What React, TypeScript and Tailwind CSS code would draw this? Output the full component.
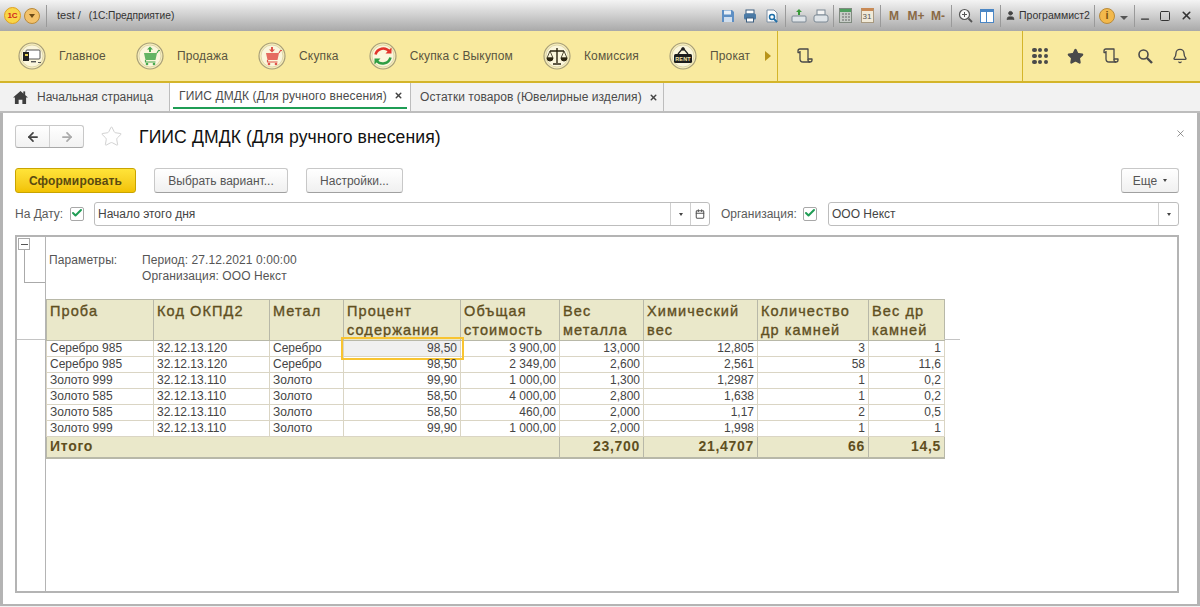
import { Bell, Star, ArrowLeft, ArrowRight, X, Check, User, Minus, Square, Calendar } from "lucide-react";

const navItems = [
  { label: "Главное", icon: "main" },
  { label: "Продажа", icon: "sale" },
  { label: "Скупка", icon: "buy" },
  { label: "Скупка с Выкупом", icon: "cycle" },
  { label: "Комиссия", icon: "scales" },
  { label: "Прокат", icon: "rent" },
];

const columns = [
  { title: ["Проба"], width: "w-[107px]" },
  { title: ["Код ОКПД2"], width: "w-[116px]" },
  { title: ["Метал"], width: "w-[74px]" },
  { title: ["Процент", "содержания"], width: "w-[117px]" },
  { title: ["Объщая", "стоимость"], width: "w-[99px]" },
  { title: ["Вес", "металла"], width: "w-[84px]" },
  { title: ["Химический", "вес"], width: "w-[114px]" },
  { title: ["Количество", "др камней"], width: "w-[111px]" },
  { title: ["Вес др", "камней"], width: "w-[76px]" },
];

const rows = [
  ["Серебро 985", "32.12.13.120", "Серебро", "98,50", "3 900,00", "13,000", "12,805", "3", "1"],
  ["Серебро 985", "32.12.13.120", "Серебро", "98,50", "2 349,00", "2,600", "2,561", "58", "11,6"],
  ["Золото 999", "32.12.13.110", "Золото", "99,90", "1 000,00", "1,300", "1,2987", "1", "0,2"],
  ["Золото 585", "32.12.13.110", "Золото", "58,50", "4 000,00", "2,800", "1,638", "1", "0,2"],
  ["Золото 585", "32.12.13.110", "Золото", "58,50", "460,00", "2,000", "1,17", "2", "0,5"],
  ["Золото 999", "32.12.13.110", "Золото", "99,90", "1 000,00", "2,000", "1,998", "1", "1"],
];

function ScrollIcon({ className = "" }: { className?: string }) {
  return (
    <svg viewBox="0 0 16 16" className={className} fill="none" stroke="#4a4a4a" strokeWidth="1.3" strokeLinejoin="round">
      <path d="M1 3a2 2 0 0 1 2-2h8v10h4v1a2 2 0 0 1-2 2H6a3 3 0 0 1-3-3V3" />
      <path d="M1 3v1.500h2" />
      <path d="M13 14a2 2 0 0 1-2-2v-1" />
    </svg>
  );
}

function NavIcon({ name }: { name: string }) {
  return (
    <svg viewBox="0 0 28 28" className="w-[28px] h-[28px] shrink-0">
      <circle cx="14" cy="14" r="13" fill="#f7eebc" stroke="#a89f78" strokeWidth="1.2" />
      <circle cx="14" cy="14" r="11" fill="#fbf6dc" stroke="#d8cfa0" strokeWidth="0.8" />
      {name === "main" && (
        <g>
          <rect x="8" y="8" width="14" height="9" rx="1" fill="#fff" stroke="#555" />
          <rect x="5" y="10" width="6" height="9" fill="#222" />
          <rect x="7" y="12" width="3" height="2" fill="#e8d050" />
          <rect x="13" y="19" width="5" height="1.400" fill="#555" />
          <rect x="20" y="20" width="3" height="1" fill="#555" />
        </g>
      )}
      {name === "sale" && <Cart color="#49a84f" arrow="M14 4.500l3 3h-2v2.500h-2V7.500h-2z" />}
      {name === "buy" && <Cart color="#e0544a" arrow="M14 10.500l3-3h-2V5h-2v2.500h-2z" />}
      {name === "cycle" && (
        <g fill="none" strokeWidth="2.6">
          <path d="M6.500 12.500a8 8 0 0 1 14-3" stroke="#e2332b" />
          <path d="M21.500 15.500a8 8 0 0 1-14 3" stroke="#2f9e44" />
          <path d="M22.500 5.500v6h-6z" fill="#e2332b" stroke="none" />
          <path d="M5.500 22.500v-6h6z" fill="#2f9e44" stroke="none" />
        </g>
      )}
      {name === "scales" && (
        <g fill="#2b2410" stroke="#2b2410">
          <path d="M14 6v15M7 9h14M10 22h8" strokeWidth="1.4" fill="none" />
          <path d="M7 9l-3 7h6zM21 9l-3 7h6z" fill="none" strokeWidth="0.8" />
          <path d="M4 16a3 3 0 0 0 6 0zM18 16a3 3 0 0 0 6 0z" />
        </g>
      )}
      {name === "rent" && (
        <g>
          <path d="M9 12l5-6 5 6" fill="none" stroke="#222" strokeWidth="1.2" />
          <circle cx="14" cy="7" r="1.800" fill="#222" />
          <rect x="5" y="12" width="18" height="9" rx="1.500" fill="#1d1d1d" />
          <text x="14" y="19" textAnchor="middle" fontSize="5.500" fontWeight="700" fill="#f5e9b0" fontFamily="Arial">RENT</text>
        </g>
      )}
    </svg>
  );
}

function Cart({ color, arrow }: { color: string; arrow: string }) {
  return (
    <g>
      <path d={arrow} fill={color} />
      <path d="M8 11h13l-1.500 7h-10z" fill={color} opacity="0.85" />
      <path d="M21 11l1.500-2.500H24M9.500 18v2h10" fill="none" stroke={color} strokeWidth="1.2" />
      <circle cx="11" cy="22" r="1.300" fill={color} />
      <circle cx="18" cy="22" r="1.300" fill={color} />
    </g>
  );
}

function Divider() {
  return <div className="w-px h-[22px] bg-[#9a9a9a] mx-[2px] shrink-0" />;
}

function Slot({ w = "w-[22px]", children }: { w?: string; children: React.ReactNode }) {
  return <div className={`${w} h-[20px] flex items-center justify-center shrink-0`}>{children}</div>;
}

function TitleBar() {
  return (
    <div className="h-[31px] shrink-0 flex items-center bg-gradient-to-b from-[#f4f4f4] via-[#cfcfcf] to-[#a9a9a9] pr-[3px] text-[11px] text-[#333]">
      <div className="w-[17px] h-[17px] ml-[4px] rounded-full bg-[#f9d648] border border-[#e0a020] flex items-center justify-center text-[8px] font-bold text-[#d0281e]">1С</div>
      <div className="w-[16px] h-[16px] ml-[3px] rounded-full bg-[#f3c26a] border border-[#b98a3a] flex items-center justify-center">
        <div className="w-0 h-0 border-x-[3.500px] border-x-transparent border-t-[4px] border-t-[#6b4a16]" />
      </div>
      <div className="w-px h-[22px] bg-[#9a9a9a] ml-[6px]" />
      <span className="ml-[10px]">test /</span>
      <span className="ml-[8px] text-[10.2px]">(1С:Предприятие)</span>
      <div className="ml-auto flex items-center">
        <Slot>
          <svg viewBox="0 0 14 14" className="w-[14px] h-[14px]">
            <path d="M1 1h10l2 2v10H1z" fill="#5d8fc4" />
            <rect x="3" y="1.500" width="7" height="4" fill="#e8eff6" />
            <rect x="3" y="8" width="8" height="5" fill="#cfdeee" />
          </svg>
        </Slot>
        <Slot>
          <svg viewBox="0 0 14 14" className="w-[14px] h-[14px]">
            <rect x="3" y="1" width="8" height="4" fill="#fff" stroke="#3d5f80" />
            <rect x="1" y="4.500" width="12" height="6" rx="1.500" fill="#4a7aa6" />
            <rect x="3.500" y="9" width="7" height="4" fill="#fff" stroke="#3d5f80" />
          </svg>
        </Slot>
        <Slot>
          <svg viewBox="0 0 14 14" className="w-[14px] h-[14px]">
            <path d="M2 1h7l3 3v9H2z" fill="#fff" stroke="#7a8ea3" />
            <circle cx="7" cy="8" r="2.500" fill="none" stroke="#1f6fa8" strokeWidth="1.500" />
            <path d="M9 10l3 3" stroke="#1f6fa8" strokeWidth="1.800" />
          </svg>
        </Slot>
        <Divider />
        <Slot>
          <svg viewBox="0 0 16 14" className="w-[16px] h-[14px]">
            <path d="M8 0l3 3H9v3H7V3H5z" fill="#3a9a3a" />
            <rect x="1" y="7" width="14" height="6" rx="1" fill="#dfe4e8" stroke="#7b8894" />
          </svg>
        </Slot>
        <Slot>
          <svg viewBox="0 0 16 14" className="w-[16px] h-[14px]">
            <rect x="4" y="1" width="8" height="5" fill="#f4f4f4" stroke="#7b8894" />
            <rect x="1" y="6" width="14" height="7" rx="2" fill="#dfe4e8" stroke="#7b8894" />
          </svg>
        </Slot>
        <div className="w-px h-[22px] bg-[#9a9a9a] ml-[1px] shrink-0" />
        <Slot>
          <svg viewBox="0 0 13 15" className="w-[13px] h-[15px]">
            <rect x="0.500" y="0.500" width="12" height="14" fill="#c8cdc8" stroke="#7f8a7f" />
            <rect x="1" y="1" width="11" height="3" fill="#4f9f5f" />
            <path d="M3 6h2M6 6h2M9 6h2M3 9h2M6 9h2M9 9h2M3 12h2M6 12h2M9 12h2" stroke="#666" />
          </svg>
        </Slot>
        <Slot>
          <div className="w-[13px] h-[15px] bg-[#f1ead8] border border-[#a89a80] border-t-[3px] border-t-[#c98a55] text-[8px] leading-[11px] text-center text-[#555]">31</div>
        </Slot>
        <Divider />
        <div className="flex items-center font-bold text-[#8a6a45] text-[12px]">
          <Slot>M</Slot>
          <Slot>M+</Slot>
          <Slot>M-</Slot>
        </div>
        <Divider />
        <Slot>
          <svg viewBox="0 0 15 15" className="w-[15px] h-[15px]">
            <circle cx="6.500" cy="6.500" r="5" fill="#f7f7f7" stroke="#555" strokeWidth="1.200" />
            <path d="M4 6.500h5M6.500 4v5" stroke="#555" />
            <path d="M10.500 10.500l3.500 3.500" stroke="#555" strokeWidth="1.800" />
          </svg>
        </Slot>
        <Slot>
          <div className="w-[14px] h-[14px] flex bg-white border-t-[3px] border-x border-b border-[#4a86c5]">
            <div className="w-1/2 border-r border-[#4a86c5]" />
          </div>
        </Slot>
        <Divider />
        <User className="w-[11px] h-[11px] ml-[2px] text-[#444] fill-[#444]" />
        <span className="ml-[3px] text-[10.5px] text-[#333] w-[71px] whitespace-nowrap">Программист2</span>
        <div className="w-px h-[22px] bg-[#9a9a9a] ml-[4px]" />
        <div className="w-[16px] h-[16px] ml-[4px] rounded-full bg-[#f3b94c] border border-[#b98a3a] flex items-center justify-center text-[11px] font-bold text-[#7b5412]">i</div>
        <div className="w-0 h-0 ml-[5px] mt-[4px] border-x-[4px] border-x-transparent border-t-[4px] border-t-[#555]" />
        <div className="w-px h-[22px] bg-[#9a9a9a] ml-[6px]" />
        <Slot w="w-[20px]"><Minus className="w-[12px] h-[12px] mt-[6px] text-[#333]" strokeWidth={2.500} /></Slot>
        <Slot w="w-[20px]"><Square className="w-[12px] h-[12px] text-[#333]" strokeWidth={2} /></Slot>
        <Slot><X className="w-[13px] h-[13px] text-[#333]" strokeWidth={3} /></Slot>
      </div>
    </div>
  );
}

function NavBar() {
  return (
    <div className="h-[52px] shrink-0 flex bg-[#f9ea9f] border-b-2 border-[#d4b52a] text-[12px] tracking-[0.15px] text-[#5a5540]">
      <div className="w-[778px] border-r border-[#d4b52a] flex items-center pl-[18px] gap-[30px] relative">
        {navItems.map((item) => (
          <div key={item.label} className="flex items-center gap-[13px]">
            <NavIcon name={item.icon} />
            <span>{item.label}</span>
          </div>
        ))}
        <div className="absolute left-[765px] top-[20px] w-0 h-0 border-y-[5px] border-y-transparent border-l-[6px] border-l-[#b8941a]" />
      </div>
      <div className="flex-1 flex items-center pl-[19px] border-r border-[#d4b52a]">
        <ScrollIcon className="w-[16px] h-[16px]" />
      </div>
      <div className="w-[177px] shrink-0 flex items-center justify-between pl-[9px] pr-[12px]">
        <div className="grid grid-cols-3 gap-[1.500px] w-[16px]">
          {Array.from({ length: 9 }).map((_, i) => (
            <div key={i} className="w-[4.500px] h-[4.500px] rounded-full bg-[#4a4a4a]" />
          ))}
        </div>
        <Star className="w-[17px] h-[17px] text-[#4a4a4a] fill-[#4a4a4a]" />
        <ScrollIcon className="w-[16px] h-[16px]" />
        <svg viewBox="0 0 16 16" className="w-[16px] h-[16px]" fill="none" stroke="#4a4a4a">
          <circle cx="6.500" cy="6.500" r="4.500" strokeWidth="1.600" />
          <path d="M10 10l5 5" strokeWidth="2.400" />
        </svg>
        <Bell className="w-[16px] h-[16px] text-[#4a4a4a]" strokeWidth={2} />
      </div>
    </div>
  );
}

function Tabs() {
  return (
    <div className="h-[30px] shrink-0 flex bg-[#f2f2f2] border-b-2 border-[#bdbdbd] text-[12px] text-[#4b4b4b]">
      <div className="w-[169px] flex items-center pl-[13px] gap-[9px]">
        <svg viewBox="0 0 16 15" className="w-[15px] h-[14px]" fill="#3f3f3f">
          <path d="M8 1l8 7h-2v7h-4v-4.500H6V15H2V8H0z" />
          <rect x="11" y="1.500" width="2" height="4" />
        </svg>
        <span>Начальная страница</span>
      </div>
      <div className="w-[241px] bg-white border-l border-[#bdbdbd] pl-[9px] pr-[3px] flex flex-col">
        <div className="flex-1 flex items-center pt-[1px] gap-[7px] whitespace-nowrap tracking-[0.13px]">
          <span>ГИИС ДМДК (Для ручного внесения)</span>
          <X className="w-[9px] h-[9px] text-[#444] shrink-0" strokeWidth={4} />
        </div>
        <div className="h-[2px] -ml-[6px] bg-[#1f9d55] mb-[2px]" />
      </div>
      <div className="w-[254px] border-x border-[#bdbdbd] flex items-center pl-[9px] gap-[7px] whitespace-nowrap tracking-[0.06px]">
        <span>Остатки товаров (Ювелирные изделия)</span>
        <X className="w-[9px] h-[9px] text-[#444] shrink-0" strokeWidth={4} />
      </div>
    </div>
  );
}

function GrayButton({ label, w }: { label: string; w: string }) {
  return (
    <button className={`${w} h-[25px] rounded-[3px] border border-[#c8c8c8] border-b-[#a0a0a0] bg-gradient-to-b from-white to-[#f0f0f0] text-[12px] text-[#555]`}>
      {label}
    </button>
  );
}

function Caret() {
  return <div className="w-0 h-0 border-x-[2.500px] border-x-transparent border-t-[3px] border-t-[#444]" />;
}

function Checked() {
  return (
    <div className="w-[14px] h-[14px] border border-[#a8a8a8] rounded-[2px] bg-white flex items-center justify-center shrink-0">
      <Check className="w-[16px] h-[16px] text-[#1f9d55] -mt-[3px]" strokeWidth={4} />
    </div>
  );
}

function Toolbar() {
  return (
    <>
      <div className="flex items-center h-[23px] mt-[12px] relative">
        <div className="w-[69px] h-[23px] flex rounded-[3px] border border-[#c8c8c8] border-b-[#a8a8a8] bg-gradient-to-b from-white to-[#f2f2f2]">
          <div className="flex-1 flex items-center justify-center border-r border-[#d0d0d0]">
            <ArrowLeft className="w-[14px] h-[14px] text-[#444]" strokeWidth={3} />
          </div>
          <div className="flex-1 flex items-center justify-center">
            <ArrowRight className="w-[14px] h-[14px] text-[#aaa]" strokeWidth={3} />
          </div>
        </div>
        <Star className="w-[23px] h-[23px] ml-[16px] text-[#cfcfcf]" strokeWidth={1} />
        <h1 className="ml-[16px] mt-[2px] text-[17.6px] tracking-[0.1px] text-[#111] whitespace-nowrap">ГИИС ДМДК (Для ручного внесения)</h1>
        <X className="absolute right-[11px] top-[3px] w-[11px] h-[11px] text-[#666]" strokeWidth={1.500} />
      </div>
      <div className="flex items-center h-[25px] mt-[20px] gap-[18px] pr-[18px]">
        <button className="w-[121px] h-[25px] rounded-[3px] border border-[#c9a400] bg-gradient-to-b from-[#ffe438] to-[#f2c200] text-[12px] font-bold tracking-[0.15px] text-[#5a4a10]">
          Сформировать
        </button>
        <GrayButton label="Выбрать вариант..." w="w-[134px]" />
        <GrayButton label="Настройки..." w="w-[97px]" />
        <button className="ml-auto w-[58px] h-[25px] rounded-[3px] border border-[#c8c8c8] border-b-[#a0a0a0] bg-gradient-to-b from-white to-[#f0f0f0] text-[12px] text-[#555] flex items-center justify-center gap-[6px]">
          Еще <Caret />
        </button>
      </div>
      <div className="flex items-center h-[24px] mt-[9px] pr-[18px] text-[12px] text-[#5a5a5a]">
        <span className="w-[55px]">На Дату:</span>
        <Checked />
        <div className="ml-[10px] w-[616px] h-[24px] flex items-center border border-[#bdbdbd] rounded-[3px] text-[#444]">
          <span className="flex-1 pl-[3px]">Начало этого дня</span>
          <div className="w-[20px] h-full border-l border-[#cfcfcf] flex items-center justify-center"><Caret /></div>
          <div className="w-[19px] h-full border-l border-[#cfcfcf] flex items-center justify-center">
            <Calendar className="w-[10px] h-[10px] text-[#555]" strokeWidth={2.500} />
          </div>
        </div>
        <span className="ml-[11px] w-[82px] whitespace-nowrap">Организация:</span>
        <Checked />
        <div className="ml-[11px] flex-1 h-[24px] flex items-center border border-[#bdbdbd] rounded-[3px] text-[#444]">
          <span className="flex-1 pl-[3px]">ООО Некст</span>
          <div className="w-[20px] h-full border-l border-[#cfcfcf] flex items-center justify-center"><Caret /></div>
        </div>
      </div>
    </>
  );
}

function ReportTable() {
  const headCell = "border border-[#b8b8a8] bg-[#eae8ca] align-top px-[3px] pt-[2px] text-left text-[14.5px] leading-[19px] font-normal tracking-[1.1px] whitespace-nowrap text-[#5f4f1f] [-webkit-text-stroke:0.35px_#5f4f1f]";
  const totalCell = "h-[21px] bg-[#eae8ca] border-t border-b-2 border-[#b8b8a8] px-[3px] text-right text-[14px] font-bold tracking-[0.7px] text-[#5f4f1f]";
  return (
    <table className="table-fixed border-collapse w-[898px] mt-[15px]">
      <thead>
        <tr className="h-[41px]">
          {columns.map((c) => (
            <th key={c.title[0]} className={`${c.width} ${headCell}`}>
              {c.title.map((line) => (
                <div key={line}>{line}</div>
              ))}
            </th>
          ))}
        </tr>
      </thead>
      <tbody className="text-[12px] leading-[15px] text-[#444]">
        {rows.map((row, r) => (
          <tr key={r} className="h-[16px]">
            {row.map((cell, c) => (
              <td
                key={c}
                className={`border border-[#dad5c4] px-[3px] whitespace-nowrap relative ${c > 2 ? "text-right" : "text-left"} ${r === 0 && c === 3 ? "bg-[#f0f0f0]" : ""}`}
              >
                {cell}
                {r === 0 && c === 3 && (
                  <div className="absolute -left-[3px] -top-[4px] w-[123px] h-[23px] border-2 border-[#f8c431]" />
                )}
              </td>
            ))}
          </tr>
        ))}
        <tr>
          <td colSpan={5} className={`${totalCell} border-l border-r !text-left`}>Итого</td>
          {["23,700", "21,4707", "66", "14,5"].map((v) => (
            <td key={v} className={`${totalCell} border-x`}>{v}</td>
          ))}
        </tr>
      </tbody>
    </table>
  );
}

function Report() {
  return (
    <div className="mt-[9px] mr-[18px] h-[358px] flex border-2 border-[#b4b4b4] relative text-[12px] text-[#555]">
      <div className="w-[28px] shrink-0 relative">
        <div className="absolute left-[1px] top-[1px] w-[12px] h-[12px] border border-[#aaa] bg-white flex items-center justify-center">
          <div className="w-[7px] h-px bg-[#555]" />
        </div>
        <div className="absolute left-[7px] top-[12px] w-[21px] h-[34px] border-l border-b border-[#aaa]" />
        <div className="absolute left-0 top-[102px] w-[28px] h-px bg-[#c4c4c4]" />
      </div>
      <div className="flex-1 border-l border-[#b4b4b4] relative">
        <div className="flex pl-[3px] pt-[15px] leading-[16px] tracking-[0.1px]">
          <span className="w-[93px]">Параметры:</span>
          <div>
            <div>Период: 27.12.2021 0:00:00</div>
            <div>Организация: ООО Некст</div>
          </div>
        </div>
        <ReportTable />
        <div className="absolute left-[898px] top-[102px] w-[16px] h-px bg-[#c4c4c4]" />
      </div>
    </div>
  );
}

export default function App() {
  return (
    <div className="w-[1200px] h-[607px] overflow-hidden flex flex-col bg-white [font-family:Arial,Helvetica,sans-serif]">
      <TitleBar />
      <NavBar />
      <Tabs />
      <div className="flex-1 flex flex-col min-h-0 border-x-[3px] border-b-2 border-[#b4b4b4] pl-[12px]">
        <Toolbar />
        <Report />
      </div>
      <div className="h-px shrink-0 bg-[#f2f2f2]" />
    </div>
  );
}
